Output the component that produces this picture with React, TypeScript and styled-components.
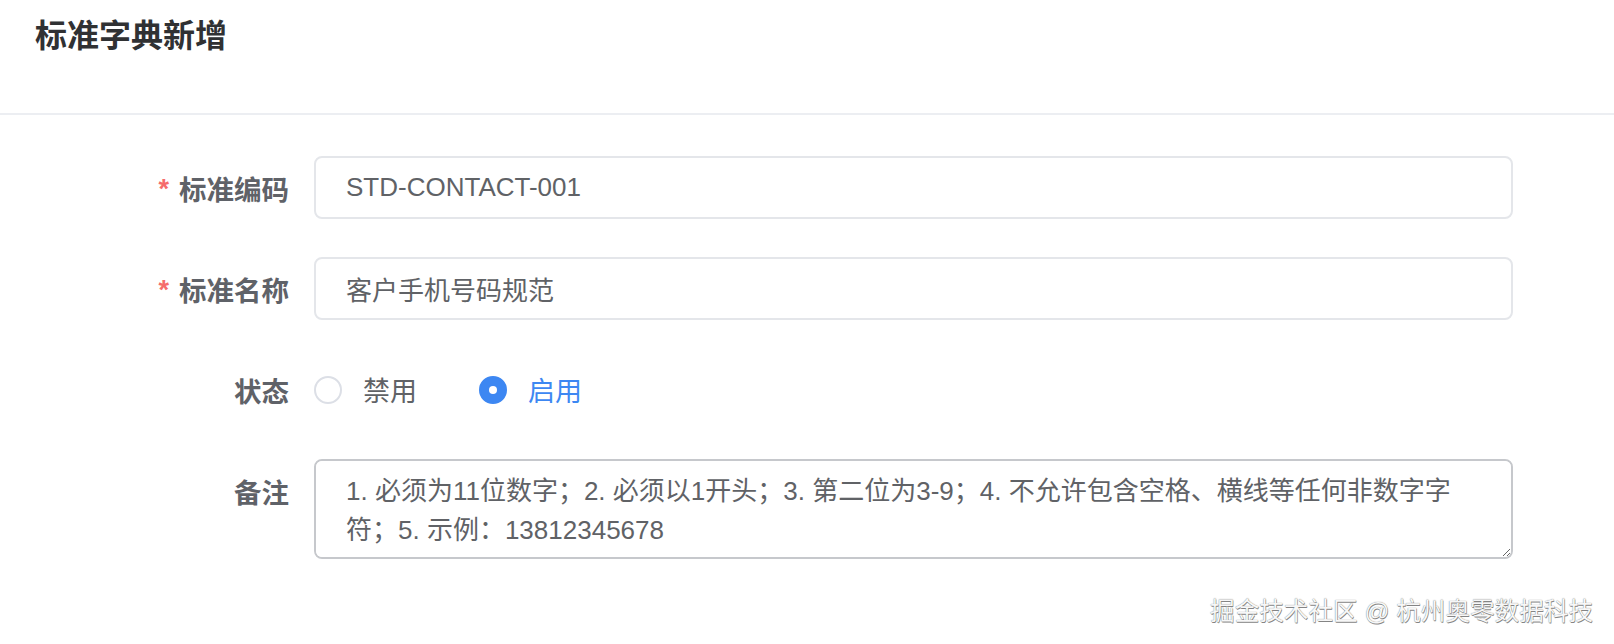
import React, { useState } from "react";
import styled, { createGlobalStyle } from "styled-components";

const Global = createGlobalStyle`
  html, body { margin: 0; padding: 0; background: #fff; }
  body { font-family: "Liberation Sans", "Noto Sans CJK SC", sans-serif; }
  * { box-sizing: border-box; }
`;

const Page = styled.div`
  position: relative;
  width: 1614px;
  height: 644px;
  background: #fff;
  overflow: hidden;
`;

const Header = styled.header`
  height: 115px;
  padding: 14px 0 0 35px;
  border-bottom: 2px solid #eceef2;
`;

const Title = styled.h1`
  margin: 0;
  font-family: "Liberation Sans", "Noto Sans CJK SC", sans-serif;
  font-size: 32px;
  line-height: 44px;
  font-weight: 700;
  color: #303133;
`;

const Form = styled.form`
  display: grid;
  grid-template-columns: 289px 1fr;
  column-gap: 25px;
  row-gap: 38px;
  padding: 41px 101px 0 0;
`;

const Label = styled.label`
  display: flex;
  justify-content: flex-end;
  align-items: center;
  height: 63px;
  font-size: 27.5px;
  font-weight: 700;
  color: #5f6268;
  white-space: nowrap;
`;

const Star = styled.span`
  color: #f56c6c;
  font-size: 27px;
  font-weight: 700;
  margin-right: 10px;
  position: relative;
  top: 2px;
`;

const TextInput = styled.input`
  width: 100%;
  height: 63px;
  border: 2px solid #e4e6ea;
  border-radius: 8px;
  padding: 0 30px;
  font-family: "Liberation Sans", "Noto Sans CJK SC", sans-serif;
  font-size: 26px;
  color: #606266;
  outline: none;
  background: #fff;
`;

const RadioGroup = styled.div`
  display: flex;
  align-items: center;
  height: 63px;
  gap: 62px;
`;

const RadioOption = styled.label<{ $active?: boolean }>`
  display: flex;
  align-items: center;
  gap: 21px;
  cursor: pointer;
  font-size: 27px;
  color: ${(p) => (p.$active ? "#3d87f2" : "#606266")};
`;

const Circle = styled.span<{ $active?: boolean }>`
  width: 28px;
  height: 28px;
  border-radius: 50%;
  border: 2px solid ${(p) => (p.$active ? "#3d87f2" : "#dcdfe6")};
  background: ${(p) => (p.$active ? "#3d87f2" : "#fff")};
  display: flex;
  align-items: center;
  justify-content: center;
  &::after {
    content: "";
    width: 8px;
    height: 8px;
    border-radius: 50%;
    background: #fff;
    display: ${(p) => (p.$active ? "block" : "none")};
  }
`;

const TextArea = styled.textarea`
  width: 100%;
  height: 100px;
  border: 2px solid #c6c8cc;
  border-radius: 8px;
  padding: 11px 40px 11px 30px;
  font-family: "Liberation Sans", "Noto Sans CJK SC", sans-serif;
  font-size: 26px;
  line-height: 39px;
  color: #606266;
  outline: none;
  display: block;
`;

const Watermark = styled.div`
  position: absolute;
  right: 21px;
  bottom: 17px;
  font-family: "Liberation Sans", "Noto Sans CJK SC", sans-serif;
  font-size: 24.6px;
  color: #f7f7f7;
  text-shadow: 0 0 1px #666, 0.5px 0.5px 0.5px #888;
  white-space: nowrap;
`;

export default function App() {
  const [status, setStatus] = useState("on");
  return (
    <Page>
      <Global />
      <Header>
        <Title>标准字典新增</Title>
      </Header>
      <Form onSubmit={(e) => e.preventDefault()}>
        <Label>
          <Star>*</Star>标准编码
        </Label>
        <TextInput defaultValue="STD-CONTACT-001" />

        <Label>
          <Star>*</Star>标准名称
        </Label>
        <TextInput defaultValue="客户手机号码规范" />

        <Label>状态</Label>
        <RadioGroup>
          <RadioOption $active={status === "off"} onClick={() => setStatus("off")}>
            <Circle $active={status === "off"} />
            禁用
          </RadioOption>
          <RadioOption $active={status === "on"} onClick={() => setStatus("on")}>
            <Circle $active={status === "on"} />
            启用
          </RadioOption>
        </RadioGroup>

        <Label>备注</Label>
        <TextArea defaultValue="1. 必须为11位数字；2. 必须以1开头；3. 第二位为3-9；4. 不允许包含空格、横线等任何非数字字符；5. 示例：13812345678" />
      </Form>
      <Watermark>掘金技术社区 @ 杭州奥零数据科技</Watermark>
    </Page>
  );
}
